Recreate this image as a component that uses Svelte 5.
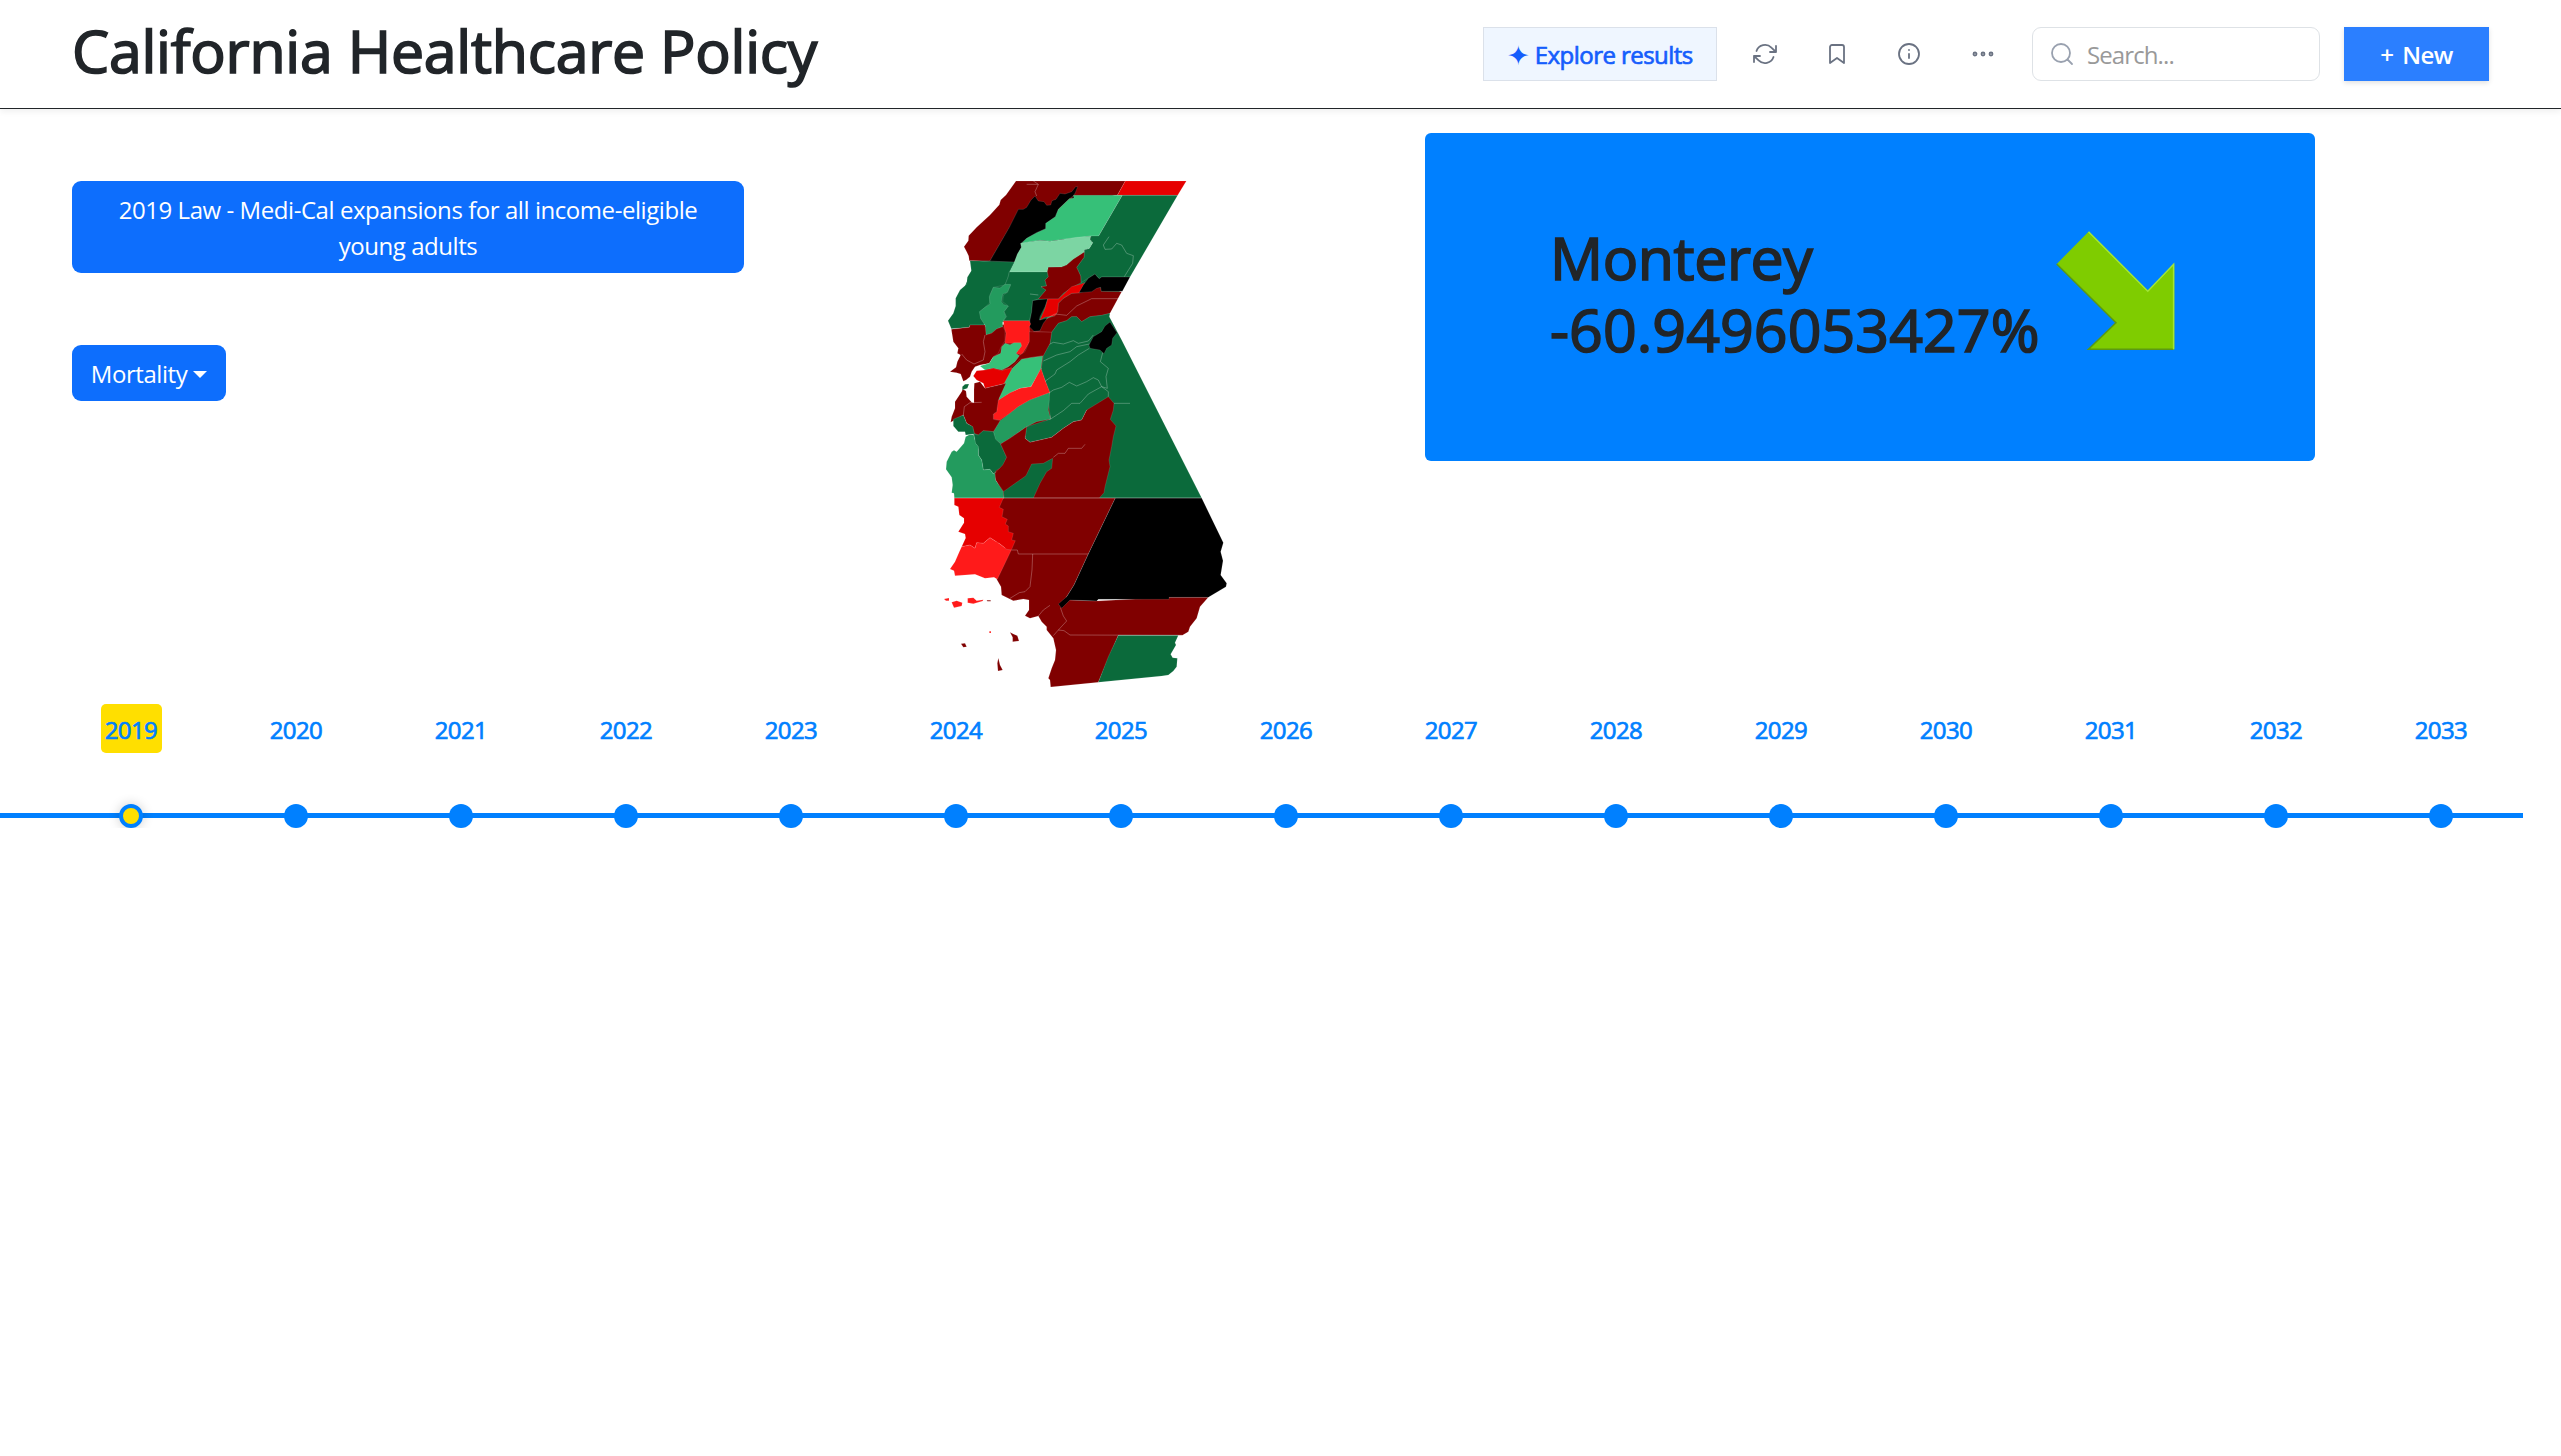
<script>
  const years = Array.from({ length: 15 }, (_, i) => 2019 + i);
  let active = $state(2019);

  const maroon = '#800000';
  const pine = '#0b6a3b';
  const jade = '#239b5e';
  const mint = '#36c078';
  const pale = '#7cd5a3';
  const red = '#e60000';
  const bright = '#ff1a1a';
  const black = '#000000';

  // Land under the counties, so that no seam shows between neighbours
  const land = [
    [black, '258,38 450,38 560,80 480,230 400,300 130,270 180,200'],
    [pine, '126,300 125,276 253,276 463,246 590,321 535,435 535,470 360,520 300,490 225,455 165,462 75,470 85,430 100,360'],
    [maroon, '72,480 300,455 365,487 360,520 335,595 300,640 200,640 165,640 165,600 200,560 140,570 92,580 92,540'],
    [maroon, '190,690 300,650 358,670 362,747 300,775 240,880 220,984 190,905 140,800 130,720'],
    [pine, '110,765 190,775 215,860 195,905 165,890 130,792'],
    [red, '190,984 230,984 250,1110 200,1120']
  ];

  // County outlines, in thirds of a pixel
  const counties = [
    [maroon, '258,33 586,33 562,76 430,78 400,120 270,120 180,272 118,272 116,258 110,245 102,230 115,212 116,197 140,172 180,135 208,104 212,90 228,75'],
    [black, '443,50 436,68 430,78 418,86 385,118 376,140 350,160 347,176 320,188 290,205 272,220 274,232 262,260 253,277 180,273 238,172 265,118 280,118 290,112 303,90 315,78 325,93 342,95 350,106 362,105 366,92 378,88 390,70 405,72 425,65 437,50'],
    [red, '586,33 769,33 743,76 562,76'],
    [mint, '430,76 577,76 506,198 483,198 440,205 400,208 360,214 330,211 300,216 272,222 290,205 320,188 347,176 347,160 376,140 385,118 418,86 432,84'],
    [pine, '577,76 743,76 600,321 515,321 508,326 495,312 453,338 452,318 440,292 462,262 463,240 478,235 488,218 480,208 483,198 506,198'],
    [pale, '272,220 300,215 330,211 360,214 400,208 440,202 483,198 480,208 488,218 478,235 463,240 462,249 430,268 410,285 395,291 355,292 352,306 238,306 253,276 262,252 274,232'],
    [pine, '120,272 253,276 238,306 233,325 225,345 190,352 180,375 178,400 150,425 152,445 165,465 120,465 118,472 64,476 54,452 70,430 77,408 77,385 90,360 110,343 112,322 124,302'],
    [pine, '238,306 352,306 355,320 345,330 350,348 333,350 348,360 325,387 308,392 305,425 298,452 220,452 230,440 222,425 235,408 218,395 220,375 232,367 242,345 225,345 235,320'],
    [jade, '225,343 242,343 236,358 232,367 218,372 214,395 222,404 235,408 222,425 228,440 218,455 218,470 200,477 185,490 168,495 165,465 152,445 148,425 165,412 180,402 178,380 190,352 210,354'],
    [maroon, '463,246 462,262 440,292 452,318 453,338 430,350 400,370 385,387 325,387 348,360 333,350 350,348 345,330 355,320 352,306 355,292 395,291 410,285 430,268'],
    [maroon, '575,365 540,430 515,436 480,440 455,455 440,440 425,440 410,452 385,460 365,487 310,484 330,482 335,462 352,445 375,437 383,425 385,400 400,385 425,370 450,368 500,352 512,352 514,364'],
    [black, '308,392 325,389 353,387 345,410 330,440 328,450 352,445 340,460 330,482 312,484 298,470 300,450 305,425'],
    [red, '465,338 458,350 450,368 425,370 400,385 385,400 383,425 375,437 345,442 330,450 345,415 353,387 385,387 425,350'],
    [black, '600,321 577,364 514,364 512,352 500,355 485,365 447,368 460,345 475,325 495,312 503,322 508,326 515,321'],
    [pine, '540,430 538,440 575,510 815,984 500,984 500,720 470,720 455,750 430,755 400,775 365,802 300,817 285,805 290,770 362,747 355,700 358,668 333,600 340,555 360,520 365,487 385,460 410,452 425,440 440,440 455,455 480,440 515,436'],
    [black, '540,456 561,488 548,505 545,525 530,535 522,551 510,540 480,535 477,525 490,500 515,485 525,468'],
    [maroon, '64,478 118,472 120,465 165,465 168,495 185,490 200,477 218,470 225,480 225,512 212,533 205,550 190,560 178,580 150,585 135,590 125,605 120,620 108,630 100,634 92,612 80,608 60,605 78,592 82,575 92,555 82,550 85,535 70,515'],
    [bright, '220,452 298,452 302,462 298,470 300,495 300,512 290,530 275,555 258,550 270,520 225,520 228,490 222,470'],
    [maroon, '298,485 365,487 360,520 340,557 300,563 270,568 240,595 215,602 235,590 260,568 270,555 285,545 298,515'],
    [mint, '225,520 240,524 252,518 272,518 275,528 258,550 268,557 255,575 235,590 215,600 190,595 165,600 150,588 178,580 190,560 212,550 215,530'],
    [red, '130,618 140,602 165,600 190,595 215,602 245,593 240,620 228,640 165,655 160,640 140,630'],
    [mint, '338,558 333,595 325,612 303,650 270,655 240,670 205,692 215,655 228,630 247,595 275,568 300,563'],
    [bright, '333,595 345,630 360,668 300,690 265,710 240,730 210,750 190,748 190,732 200,725 203,692 240,668 270,655 303,650'],
    [jade, '358,668 358,690 355,720 362,747 320,755 290,770 240,805 212,822 195,808 190,785 210,752 240,730 265,710 300,690'],
    [maroon, '133,640 150,635 165,655 228,640 205,690 200,725 190,732 190,748 210,752 190,785 160,782 145,795 133,790 128,770 110,760 100,735 62,757 65,740 75,715 75,695 95,665 98,658 108,663 110,680 125,697 132,698 132,660'],
    [pine, '97,650 105,643 117,642 112,655 97,660'],
    [pine, '70,748 100,735 110,760 128,770 133,792 107,795 105,785 85,785 70,768'],
    [pine, '133,793 145,795 160,782 190,785 197,808 212,822 230,862 220,890 200,900 190,912 180,898 160,900 155,870 145,855 145,830 135,820'],
    [jade, '107,800 118,794 131,794 137,820 145,830 145,855 155,870 160,900 180,898 190,912 198,905 197,930 220,965 222,984 73,984 72,970 65,968 68,945 65,922 48,898 50,875 65,845 72,841 80,845 102,820'],
    [maroon, '290,770 285,805 300,817 365,802 400,775 430,755 455,750 470,720 535,680 552,700 550,720 541,748 558,768 550,800 545,830 537,870 540,890 525,950 522,968 508,984 222,984 220,963 197,930 195,910 218,885 230,862 212,822 240,805'],
    [pine, '220,965 288,917 305,882 340,880 368,865 365,895 350,905 330,940 310,984 222,984'],
    [maroon, '222,984 556,984 475,1152 432,1245 410,1280 392,1315 418,1290 500,1293 717,1282 835,1282 810,1310 800,1345 780,1370 775,1385 757,1396 565,1396 505,1537 362,1551 360,1530 355,1525 365,1495 375,1470 378,1440 370,1405 350,1380 350,1370 335,1355 325,1338 300,1345 285,1337 297,1320 297,1290 280,1287 250,1292 215,1275 213,1250 200,1228 225,1140 220,1100 190,1010'],
    [red, '73,984 220,984 208,1012 220,1018 216,1040 232,1048 226,1062 235,1068 235,1085 250,1090 245,1110 256,1112 244,1140 230,1138 210,1122 180,1103 160,1120 140,1118 135,1135 120,1125 95,1130 107,1104 105,1092 85,1085 102,1058 102,1045 88,1035 85,1010 73,1005'],
    [bright, '95,1130 120,1125 135,1135 140,1118 160,1120 180,1103 210,1122 230,1138 244,1140 202,1228 192,1222 165,1225 135,1213 75,1217 72,1202 60,1197 75,1175 88,1145'],
    [black, '556,984 815,984 880,1118 872,1145 879,1172 872,1215 890,1240 888,1250 835,1282 717,1282 717,1288 505,1288 500,1293 420,1290 395,1315 385,1302 410,1280 432,1245 475,1152'],
    [pine, '565,1396 745,1396 735,1418 738,1425 722,1453 728,1463 742,1465 740,1490 730,1503 715,1515 695,1518 505,1537 535,1460'],
    [bright, '42,1287 57,1284 57,1292 48,1292'],
    [bright, '65,1297 80,1292 97,1298 95,1308 72,1313'],
    [bright, '113,1285 130,1283 140,1292 160,1289 158,1293 130,1301 113,1298'],
    [bright, '178,1384 183,1384 183,1389 178,1389'],
    [maroon, '170,1291 182,1291 182,1294 172,1294'],
    [maroon, '93,1421 105,1420 110,1430 100,1432'],
    [maroon, '240,1387 250,1392 262,1397 267,1413 248,1415 248,1402'],
    [maroon, '205,1464 210,1485 218,1500 204,1503 202,1480']
  ];

  const borders = [
    '290,43 325,43 315,65 320,78',
    '310,33 325,43',
    '537,200 520,225 525,238 545,237 560,220 575,225 590,250 610,257 608,280 583,320',
    '300,372 325,375',
    '350,445 375,432 410,436 440,408 485,386 568,386',
    '360,522 370,517 400,522 430,512 445,520 475,513 490,495',
    '340,573 380,555 420,545 440,530 478,522',
    '345,634 375,612 380,600 420,575 445,555 478,535',
    '358,668 370,660 395,652 418,637 440,648 470,635 490,623 505,630 515,650',
    '362,747 400,722 425,700 450,700 475,672 515,650',
    '518,548 511,575 535,595 528,620 532,655 515,650 535,665 535,680',
    '552,700 600,700',
    '165,495 160,515 165,545 160,570 132,582 110,570 95,552',
    '100,735 103,710 120,698 155,697',
    '370,862 385,850 405,850 415,835 455,835 465,823',
    '73,984 815,984',
    '245,1140 262,1140 265,1152 475,1152',
    '308,1152 306,1200 300,1250 285,1265 268,1268 240,1285',
    '325,1338 340,1320 360,1306',
    '392,1315 400,1338 410,1353 385,1380 370,1397',
    '385,1380 402,1382 420,1395 757,1396'
  ];
</script>

<header>
  <h1>California Healthcare Policy</h1>
  <div class="tools">
    <button class="explore"><span class="spark">✦</span><span>Explore results</span></button>
    <div class="icons">
      <button aria-label="Refresh">
        <svg class="icon" viewBox="0 0 24 24"><path d="M23 4v6h-6M1 20v-6h6M3.5 9a9 9 0 0 1 14.9-3.4L23 10M1 14l4.6 4.4A9 9 0 0 0 20.500 15" /></svg>
      </button>
      <button aria-label="Bookmark">
        <svg class="icon" viewBox="0 0 24 24"><path d="M19 21l-7-5-7 5V5a2 2 0 0 1 2-2h10a2 2 0 0 1 2 2z" /></svg>
      </button>
      <button aria-label="Information">
        <svg class="icon" viewBox="0 0 24 24"><circle cx="12" cy="12" r="10" /><path d="M12 16v-4M12 8h.01" /></svg>
      </button>
      <button class="more" aria-label="More">
        <svg class="icon" viewBox="0 0 24 24"><circle cx="4" cy="12" r="1.500" /><circle cx="12" cy="12" r="1.500" /><circle cx="20" cy="12" r="1.500" /></svg>
      </button>
    </div>
    <label class="search">
      <svg class="icon" viewBox="0 0 24 24"><circle cx="11" cy="11" r="9" /><path d="M22 22l-4.500-4.500" /></svg>
      <input placeholder="Search..." aria-label="Search" />
    </label>
    <button class="new"><span class="plus">+</span><span>New</span></button>
  </div>
</header>

<main>
  <section class="filters">
    <button class="law">2019 Law - Medi-Cal expansions for all income-eligible<br />young adults</button>
    <button class="dropdown"><span>Mortality</span><i class="caret"></i></button>
  </section>

  <svg class="map" viewBox="0 33 930 1521" role="img" aria-label="California counties">
    {#each land as [fill, points]}
      <polygon class="land" {points} {fill} />
    {/each}
    {#each counties as [fill, points]}
      <polygon {points} {fill} />
    {/each}
    {#each borders as points}
      <polyline {points} />
    {/each}
  </svg>

  <section class="card">
    <div class="figure">
      <span class="county">Monterey</span>
      <span class="value">-60.9496053427%</span>
    </div>
    <svg class="arrow" viewBox="0 0 120 120">
      <path class="face" d="M33.500 1.700L92.800 61.300L119.200 34.300V119.700H33.500L61 92.700L1.700 34z" />
      <path class="shade" d="M1.700 34L61 92.700L33.500 119.200H118" />
      <path class="shine" d="M33.500 1.700L92.800 61.300L118.600 34.300V119" />
    </svg>
  </section>
</main>

<ol class="timeline">
  {#each years as year}
    <li class:active={year === active}>
      <button onclick={() => (active = year)}>{year}</button>
      <i class="dot"></i>
    </li>
  {/each}
</ol>

<style>
  :global(body) {
    background: #fff;
    color: #212529;
    font-family: 'Open Sans', 'Noto Sans', sans-serif;
    font-size: 24px;
    line-height: 36px;
  }
  button,
  input {
    border: 0;
    padding: 0;
    margin: 0;
    background: none;
    font: inherit;
    color: inherit;
    white-space: nowrap;
  }
  header {
    box-sizing: border-box;
    height: 109px;
    padding: 0 72px;
    display: flex;
    justify-content: space-between;
    border-bottom: 1px solid #212529;
    box-shadow: 0 3px 6px rgba(0, 0, 0, 0.06);
  }
  h1 {
    margin: 14px 0 0;
    font-size: 59px;
    font-weight: 400;
    line-height: 72px;
    letter-spacing: -0.25px;
    white-space: nowrap;
    -webkit-text-stroke: 1.700px #212529;
  }
  .tools {
    display: flex;
    align-items: flex-start;
    padding-top: 27px;
  }
  .explore {
    box-sizing: border-box;
    width: 234px;
    height: 54px;
    display: flex;
    align-items: center;
    justify-content: center;
    gap: 5px;
    padding-top: 2px;
    background: #eff6ff;
    border: 1px solid #dbe1ea;
    color: #155dfc;
    letter-spacing: -0.550px;
    -webkit-text-stroke: 0.700px #155dfc;
  }
  .spark {
    font-size: 27px;
    -webkit-text-stroke: 0;
  }
  .icons {
    display: flex;
    margin-left: 12px;
    margin-right: 15px;
  }
  .icons button {
    width: 72px;
    height: 54px;
    display: grid;
    place-items: center;
    color: #6a7282;
  }
  .icons .more {
    padding-left: 3px;
  }
  .icon {
    width: 24px;
    height: 24px;
    fill: none;
    stroke: currentColor;
    stroke-width: 1.800;
    stroke-linecap: round;
    stroke-linejoin: round;
  }
  .search {
    box-sizing: border-box;
    width: 288px;
    height: 54px;
    display: flex;
    align-items: center;
    gap: 13px;
    padding-left: 17px;
    border: 1px solid #dee2e6;
    border-radius: 9px;
    color: #99a1af;
  }
  .search .icon {
    flex: none;
  }
  .search input {
    width: 200px;
    padding-top: 2px;
    letter-spacing: -0.900px;
  }
  .search input::placeholder {
    color: #999;
    opacity: 1;
  }
  .new {
    width: 145px;
    height: 54px;
    margin-left: 24px;
    display: flex;
    align-items: center;
    justify-content: center;
    gap: 9px;
    padding-top: 2px;
    background: #2b7fff;
    color: #fff;
    font-weight: 600;
    letter-spacing: -0.600px;
    box-shadow: 0 2px 5px rgba(0, 0, 0, 0.12);
  }
  main {
    box-sizing: border-box;
    display: flex;
    align-items: flex-start;
    height: 571px;
    padding: 24px 0 0 72px;
  }
  .filters {
    width: 672px;
    margin-top: 48px;
    display: flex;
    flex-direction: column;
    align-items: flex-start;
    gap: 72px;
  }
  .law,
  .dropdown {
    background: #0d6efd;
    color: #fff;
    border-radius: 9px;
    padding-top: 2px;
    letter-spacing: -0.440px;
  }
  .law {
    width: 672px;
    height: 92px;
  }
  .dropdown {
    width: 154px;
    height: 56px;
    display: flex;
    align-items: center;
    justify-content: center;
    gap: 6px;
  }
  .caret {
    border: 7px solid transparent;
    border-top-color: #fff;
    border-bottom: 0;
  }
  .map {
    flex: none;
    width: 310px;
    height: 507px;
    margin: 48px 0 0 186px;
  }
  .map polygon {
    stroke: #fff;
    stroke-opacity: 0.22;
    stroke-width: 1.600;
  }
  .map .land {
    stroke: none;
  }
  .map polyline {
    fill: none;
    stroke: #fff;
    stroke-opacity: 0.4;
    stroke-width: 2;
  }
  .card {
    box-sizing: border-box;
    width: 890px;
    height: 328px;
    margin-left: 185px;
    padding-left: 125px;
    display: flex;
    align-items: center;
    background: #0080ff;
    border-radius: 6px;
  }
  .figure {
    width: 505px;
    margin-bottom: 8px;
    display: flex;
    flex-direction: column;
    font-size: 59px;
    line-height: 72px;
    white-space: nowrap;
    -webkit-text-stroke: 1.700px #212529;
  }
  .county {
    letter-spacing: -0.400px;
  }
  .value {
    letter-spacing: 0.100px;
  }
  .arrow {
    width: 120px;
    height: 120px;
    margin-bottom: 15px;
  }
  .face {
    fill: #7fcc00;
  }
  .shade,
  .shine {
    fill: none;
    stroke-width: 1.500;
  }
  .shade {
    stroke: #5c9a10;
  }
  .shine {
    stroke: #a3e635;
  }
  .timeline {
    position: relative;
    list-style: none;
    width: 2475px;
    margin: 24px 0 0;
    padding: 0 0 0 48.500px;
    display: grid;
    grid-template-columns: repeat(15, 165px);
  }
  .timeline::before {
    content: '';
    position: absolute;
    left: 0;
    top: 109.200px;
    width: 2523px;
    height: 4.500px;
    background: #0080ff;
  }
  li {
    position: relative;
    display: flex;
    flex-direction: column;
    align-items: center;
    gap: 51px;
  }
  li button {
    width: 61px;
    height: 48.500px;
    border-radius: 5px;
    color: #0080ff;
    letter-spacing: -0.600px;
    padding-top: 3px;
    -webkit-text-stroke: 0.700px #0080ff;
  }
  .active button {
    background: #ffdf00;
  }
  .dot {
    box-sizing: border-box;
    width: 24px;
    height: 24px;
    border-radius: 50%;
    background: #0080ff;
  }
  .active .dot {
    background: #ffdf00;
    border: 4px solid #0080ff;
    box-shadow: 0 0 12px rgba(0, 0, 0, 0.2);
  }
</style>
